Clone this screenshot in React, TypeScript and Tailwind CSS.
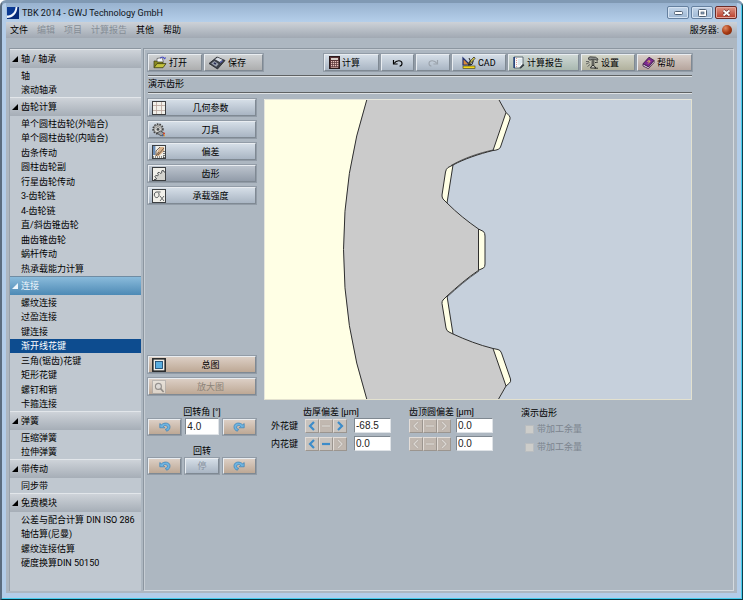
import React from "react";
import clsx from "clsx";

type Section = { title: string; items: string[]; active?: boolean };

const SECTIONS: Section[] = [
  { title: "轴 / 轴承", items: ["轴", "滚动轴承"] },
  {
    title: "齿轮计算",
    items: [
      "单个圆柱齿轮(外啮合)",
      "单个圆柱齿轮(内啮合)",
      "齿条传动",
      "圆柱齿轮副",
      "行星齿轮传动",
      "3-齿轮链",
      "4-齿轮链",
      "直/斜齿锥齿轮",
      "曲齿锥齿轮",
      "蜗杆传动",
      "热承载能力计算",
    ],
  },
  {
    title: "连接",
    active: true,
    items: ["螺纹连接", "过盈连接", "键连接", "渐开线花键", "三角(锯齿)花键", "矩形花键", "螺钉和销", "卡箍连接"],
  },
  { title: "弹簧", items: ["压缩弹簧", "拉伸弹簧"] },
  { title: "带传动", items: ["同步带"] },
  {
    title: "免费模块",
    items: ["公差与配合计算 DIN ISO 286", "轴估算(尼曼)", "螺纹连接估算", "硬度换算DIN 50150"],
  },
];

const SELECTED = "渐开线花键";

const MENU = [
  { label: "文件", enabled: true },
  { label: "编辑", enabled: false },
  { label: "项目", enabled: false },
  { label: "计算报告", enabled: false },
  { label: "其他", enabled: true },
  { label: "帮助", enabled: true },
];

/* ---------- icons ---------- */

function LogoIcon() {
  return (
    <svg width="12" height="12" viewBox="0 0 12 12" aria-hidden="true">
      <rect width="12" height="12" fill="#0b3a93" />
      <path d="M0 9.5C5 9.5 8.5 6.5 9.5 0H12V12H0Z" fill="#062a78" />
      <path d="M0 8.6C4.6 8.4 8 5.6 8.6 0L10.4 0C10 7 6 10.8 0 11Z" fill="#f2f7fd" />
    </svg>
  );
}

function OpenIcon() {
  return (
    <svg width="14" height="13" viewBox="0 0 14 13" aria-hidden="true">
      <path d="M4 8V2.5L9 1.5L10.5 6" fill="#f4f6fb" stroke="#555" strokeWidth=".7" />
      <path d="M7 2.2C9 .5 11 1 12 2.6L12.4 1.4M12 2.8L10.6 2.6" fill="none" stroke="#3a40c8" strokeWidth="1" />
      <path d="M1 11.5V5H3.5L4.5 6H10V8" fill="#8a8a22" stroke="#3a3a10" strokeWidth=".7" />
      <path d="M1 11.7L4 7.6H13L10 11.7Z" fill="#c3c23c" stroke="#3a3a10" strokeWidth=".8" />
    </svg>
  );
}

function SaveIcon() {
  return (
    <svg width="18" height="14" viewBox="0 0 18 14" aria-hidden="true">
      <path d="M1 7.5L9 1L17 4.5L9.5 13Z" fill="#3c4048" stroke="#22252b" strokeWidth=".8" />
      <path d="M7 3.2L9.6 1.4L14.5 3.7L11.8 6Z" fill="#d8dde6" />
      <path d="M3.2 7.4L6.4 5L10.6 8L8.2 10.8Z" fill="#9aa1ad" />
      <path d="M5.4 7.2L6.6 6.3L8.4 7.6L7.3 8.8Z" fill="#2a2d55" />
      <path d="M12 6.6L14.8 4.8" stroke="#5b62c9" strokeWidth="1" />
    </svg>
  );
}

function CalcIcon() {
  return (
    <svg width="11" height="13" viewBox="0 0 11 13" aria-hidden="true">
      <rect x=".5" y=".5" width="10" height="12" fill="#5a3437" stroke="#2b1a1c" />
      <rect x="2" y="2" width="7" height="2" fill="#d9cfc9" />
      <g fill="#e9c3be">
        {[5, 7, 9].map((y) => [2, 4, 6, 8].map((x) => <rect key={`${x}-${y}`} x={x} y={y} width="1.3" height="1.3" />))}
        <rect x="2" y="11" width="7" height=".6" />
      </g>
    </svg>
  );
}

function UndoIcon({ flip = false }: { flip?: boolean }) {
  return (
    <svg width="12" height="10" viewBox="0 0 12 10" className={clsx(flip && "-scale-x-100")} aria-hidden="true">
      <path d="M2 5.5C4.5 2 9.4 2 10 5C10.2 6.8 9.2 7.8 7.6 8.2" fill="none" stroke="currentColor" strokeWidth="1.1" />
      <path d="M1.5 2V6H5.6" fill="none" stroke="currentColor" strokeWidth="1.2" />
    </svg>
  );
}

function CadIcon() {
  return (
    <svg width="14" height="13" viewBox="0 0 14 13" aria-hidden="true">
      <path d="M1 2V9H8Z" fill="#d98b3a" stroke="#22306e" strokeWidth="1.2" />
      <path d="M6 7.5L12 1L13 2.4L7.4 8.4Z" fill="#f3e04a" stroke="#222" strokeWidth=".8" />
      <path d="M7 2L8.4 5L7 8M11.4 4.6L10 8.4L6 9" fill="none" stroke="#222" strokeWidth="1" />
      <rect x="1" y="10" width="12" height="2.4" fill="#f5d819" stroke="#3d3a10" strokeWidth=".6" />
    </svg>
  );
}

function ReportIcon() {
  return (
    <svg width="12" height="13" viewBox="0 0 12 13" aria-hidden="true">
      <path d="M1 1H10V8L6.5 12H1Z" fill="#f4f7f7" stroke="#53606b" strokeWidth=".9" />
      <path d="M1.2 1V12" stroke="#1b3a7a" strokeWidth="1.4" />
      <path d="M3.5 2V11" stroke="#d06b6b" strokeWidth=".7" strokeDasharray="1 1" />
      <path d="M5 4H9M5 6H9M5 8H8" stroke="#a6c3d6" strokeWidth=".6" />
      <path d="M6.3 12.2L10.5 8L11.4 9.2L7.8 12.6Z" fill="#2c3338" />
    </svg>
  );
}

function SettingsIcon() {
  return (
    <svg width="14" height="13" viewBox="0 0 14 13" aria-hidden="true">
      <path d="M3.5 1.8L5 .8L10.5 1.2L13 3L12.5 4.4L9.4 3.4H7L5 4.2L3.6 3.4Z" fill="#8c8f8c" stroke="#1e1f1e" strokeWidth=".7" />
      <path d="M1 5.5H4M1 8L4.5 6.5M2.5 10.5L5 8.5" stroke="#5b5c5a" strokeWidth=".9" />
      <path d="M7.2 4V9.5M8.8 4V9.5" stroke="#2a2b2a" strokeWidth=".9" />
      <path d="M5.4 12L7 9.6H9L10.8 12ZM10 6.6L13 6M9.5 12.2H13" fill="#d7d8d2" stroke="#1e1f1e" strokeWidth=".9" />
    </svg>
  );
}

function HelpIcon() {
  return (
    <svg width="13" height="13" viewBox="0 0 13 13" aria-hidden="true">
      <path d="M1 7.8L7 1.2L12 4.4L6.6 11Z" fill="#7d2a92" stroke="#35103f" strokeWidth=".8" />
      <path d="M1 8V10L6.4 12.6L12 6.6V4.6L6.6 11Z" fill="#f2ecf4" stroke="#35103f" strokeWidth=".8" />
      <path d="M5.4 5.8C6.4 4.2 8.6 4.6 7.6 6C7 6.6 6.4 6.6 6.2 7.4" fill="none" stroke="#f4d54f" strokeWidth="1" />
    </svg>
  );
}

function TileIcon({ kind, dim = false }: { kind: string; dim?: boolean }) {
  return (
    <svg width="14" height="14" viewBox="0 0 14 14" className={clsx(dim && "opacity-60")} aria-hidden="true">
      {kind !== "gear" && <rect x=".5" y=".5" width="13" height="13" fill="#f1f0ea" stroke={dim ? "#aaa" : "#3c3f42"} />}
      {kind === "grid" && <path d="M4.5 1V13M9.5 1V13M1 4.5H13M1 9.5H13" stroke="#b8a39b" strokeWidth=".8" />}
      {kind === "gear" && (
        <>
          <circle cx="6" cy="6" r="4.8" fill="#c3c5c4" stroke="#444" strokeWidth="1.8" strokeDasharray="1.6 1" />
          <circle cx="6" cy="6" r="4" fill="#d4d5d2" stroke="#555" strokeWidth=".6" />
          <path d="M3.4 5.4A2.8 2.8 0 0 1 8.6 5.4" fill="none" stroke="#777" strokeWidth=".8" />
          <circle cx="6" cy="6.4" r="1.4" fill="#4b4f52" />
          <path d="M5 10L8.5 8L12.5 10.5L9 13Z" fill="#9a9fa3" stroke="#333" strokeWidth=".7" />
          <circle cx="12" cy="10.4" r="1" fill="#d6432e" />
          <circle cx="12" cy="12.6" r="1" fill="#e39a26" />
          <circle cx="10.8" cy="12.6" r=".8" fill="#2f56b0" />
        </>
      )}
      {kind === "deviation" && (
        <>
          <path d="M1 1H3.4V10H1Z" fill="#6a8db8" />
          <path d="M3 11L8 2L12 2V6L7 11Z" fill="#d9b28a" />
          <path d="M4 10V6L8 2M6 10L12 3M4 11L7 7" fill="none" stroke="#5a4a3e" strokeWidth=".8" />
          <path d="M1 12H13M12 6V13" stroke="#25282c" strokeWidth="1.2" strokeDasharray="1 1" />
        </>
      )}
      {kind === "profile" && (
        <>
          <path d="M4 13C4.4 9 7.6 5.6 13 5V13Z" fill="#d3d3ce" />
          <path
            d="M2 12.4L4 12.6L4.4 11L2.8 9.8L3.8 8.4L5.4 9L6.4 7.8L5.6 6L7 5.2L8.2 6.4L9.8 5.8L9.8 3.8L11.4 3.4L12 5H13"
            fill="none"
            stroke="#4b4e50"
            strokeWidth="1"
          />
        </>
      )}
      {kind === "sigma" && (
        <>
          <path d="M8.6 3H5A2.4 2.8 0 1 0 6.4 3.8" fill="none" stroke="#55585a" strokeWidth="1" />
          <path d="M8 7L12 12M12 7L8 12" stroke="#55585a" strokeWidth=".9" />
        </>
      )}
      {kind === "overview" && (
        <>
          <rect x="1" y="1" width="12" height="12" fill="#f1efe9" stroke="#222" strokeWidth="1.2" />
          <rect x="3.5" y="3.5" width="7" height="7" fill="#5aaee0" stroke="#1f4d73" strokeWidth=".9" />
        </>
      )}
      {kind === "zoom" && (
        <>
          <circle cx="6.4" cy="6.4" r="3" fill="#e8eef2" stroke="#6f7478" strokeWidth="1.1" />
          <path d="M8.6 8.6L11.6 12" stroke="#6f7478" strokeWidth="1.6" />
        </>
      )}
    </svg>
  );
}

function RotateIcon({ flip = false }: { flip?: boolean }) {
  return (
    <svg width="12" height="10" viewBox="0 0 12 10" className={clsx(flip && "-scale-x-100")} aria-hidden="true">
      <path
        d="M.8 1.6L2.4 2.8C5 .2 10.4 .4 11 4.4C11.3 6.8 9.8 8.6 7.6 9.2L6.4 7.2C8 7 8.8 6 8.4 4.8C7.8 3.2 5.6 3 4.4 4.4L5.8 5.8H.8Z"
        fill="#6fb4e0"
        stroke="#3b7fb4"
        strokeWidth=".7"
      />
    </svg>
  );
}

/* ---------- shared controls ---------- */

const BEVEL = "border border-t-[#e9edf1] border-l-[#e9edf1] border-r-[#7f8993] border-b-[#7f8993] outline outline-[#929ca7]";

const TONES = {
  grey: "bg-linear-to-b from-[#cfd2d4] to-[#adaeaf]",
  blue: "bg-linear-to-b from-[#d5dee7] to-[#a9b5c3]",
  pressed: "bg-linear-to-b from-[#bcc4ce] to-[#929ca9]",
  green: "bg-linear-to-b from-[#cfd8d5] to-[#a9b8b0]",
  olive: "bg-linear-to-b from-[#d3d5c9] to-[#b1b19d]",
  rose: "bg-linear-to-b from-[#d8cfca] to-[#b6a59d]",
  tan: "bg-linear-to-b from-[#dccfc5] to-[#bda895]",
};

type Tone = keyof typeof TONES;

function ToolButton(props: {
  tone: Tone;
  icon: React.ReactNode;
  label?: string;
  name?: string;
  layout: string;
  disabled?: boolean;
}) {
  return (
    <button
      type="button"
      aria-label={props.name}
      disabled={props.disabled}
      className={clsx(
        "flex h-[17px] items-center gap-[2px] whitespace-nowrap",
        BEVEL,
        TONES[props.tone],
        props.layout,
        props.disabled ? "text-[#9ba3ac]" : "text-black",
      )}
    >
      {props.icon}
      {props.label && <span>{props.label}</span>}
    </button>
  );
}

function PageButton(props: { tone: Tone; kind: string; label: string; disabled?: boolean }) {
  return (
    <button
      type="button"
      disabled={props.disabled}
      className={clsx(
        "flex h-[17px] w-full items-center pl-[3px]",
        BEVEL,
        TONES[props.tone],
        props.disabled ? "text-[#8c8378]" : "text-black",
      )}
    >
      <TileIcon kind={props.kind} dim={props.disabled} />
      <span className="flex-1 text-center">{props.label}</span>
    </button>
  );
}

function RotateButton({ name, flip }: { name: string; flip?: boolean }) {
  return (
    <button type="button" aria-label={name} className={clsx("flex h-4 items-center justify-center", BEVEL, TONES.tan)}>
      <RotateIcon flip={flip} />
    </button>
  );
}

const STEP_PATHS = ["M8 2L4 6L8 10", "M2 6H10", "M4 2L8 6L4 10"];
const STEP_NAMES = ["减小", "归零", "增大"];

function Stepper({ label, enabled }: { label: string; enabled: boolean[] }) {
  return (
    <div className="flex">
      {STEP_PATHS.map((d, i) => (
        <button
          key={d}
          type="button"
          disabled={!enabled[i]}
          aria-label={`${label} ${STEP_NAMES[i]}`}
          className={clsx(
            "flex h-[14px] w-[14px] items-center justify-center border border-t-[#e3ddd8] border-l-[#e3ddd8] border-r-[#9b958f] border-b-[#9b958f]",
            enabled[i] ? "bg-[#c8c3be]" : "bg-[#c1b8b0]",
          )}
        >
          <svg width="12" height="12" viewBox="0 0 12 12" aria-hidden="true">
            {!enabled[i] && <path d={d} fill="none" stroke="#a19b95" strokeWidth="2.2" />}
            <path d={d} fill="none" stroke={enabled[i] ? "#3d8cc9" : "#dcd7d2"} strokeWidth={enabled[i] ? 2.2 : 1.5} />
          </svg>
        </button>
      ))}
    </div>
  );
}

function NumberBox({ id, label, value, size }: { id?: string; label?: string; value: string; size: string }) {
  return (
    <input
      id={id}
      type="text"
      aria-label={label}
      defaultValue={value}
      className={clsx(
        "block border border-t-[#7f8891] border-l-[#7f8891] border-r-[#dfe3e7] border-b-[#dfe3e7] bg-white px-px font-['Liberation_Sans',sans-serif] text-[10px] leading-3 text-[#222] outline-none",
        size,
      )}
    />
  );
}

/* ---------- drawing of the spline teeth ---------- */

function ToothDrawing() {
  const flank =
    "M234.5 0L242 13.5L245 16.5Q246.5 18 246 20L236.5 48Q235.5 51 229 51.5C215 55 200 60 189 66L184 68.5Q182 70 181.5 73L178 96Q177.8 98 179 100L183 104C193 114 203 122 214.5 130L219.5 132.5Q221 134 221 137V165Q221 168 219.5 169L215 171C203 179 193 188 183 197L179 201Q177.8 202.5 178 204.5L182 229Q182.5 232 185 233L189 235C202 241 215 246 229 249.5L234 250.5Q236.5 251 237.5 254L246.5 280Q247.2 282.5 245.5 284L242 287L234 301";
  return (
    <svg viewBox="0 0 428 301" className="block h-auto w-full bg-[#c6d0dc]" role="img" aria-label="演示齿形">
      <path d={`${flank}H0V0Z`} fill="#ffffe5" />
      <path
        d="M103 0A494 494 0 0 0 103 301H234L242 287L229 249.5C215 246 202 241 189 235L183 197C193 188 203 179 214.5 171V130C203 122 193 114 183 104L189 66C200 60 215 55 229 51.5L242 13.5L234.5 0Z"
        fill="#cbcbcb"
      />
      <path d="M189 66L183 104L179 100Q177.8 98 178 96L181.5 73Q182 70 184 68.5Z" fill="#ffffe5" />
      <path d="M183 197L189 235L185 233Q182.5 232 182 229L178 204.5Q177.8 202.5 179 201Z" fill="#ffffe5" />
      <g fill="none" stroke="#2e2e2e" strokeWidth="1">
        <path d="M103 0A494 494 0 0 0 103 301" />
        <path d={flank} />
        <path d="M242 13.5L229 51.5M189 66L183 104M214.5 130V171M183 197L189 235M229 249.5L242 287" />
        <path d="M229 51C215 54 200 59 187 66.5M183 198C193 189 203 180 215 172" strokeWidth=".7" />
      </g>
      <path d="M.5 301V.5H428" fill="none" stroke="#e6e6dc" />
      <path d="M0 300.5H427.5V0" fill="none" stroke="#e3e1cf" />
    </svg>
  );
}

/* ---------- page parts ---------- */

function TitleBar() {
  const cap = "flex h-[13px] w-[22px] items-center justify-center rounded-[2px] border border-[#65809f] shadow-[inset_0_0_0_1px_#d5e3f2]";
  return (
    <header className="flex h-[19px] items-center bg-linear-to-b from-[#98b2cf] to-[#b5cfea] pl-px">
      <LogoIcon />
      <h1 className="ml-[3px] flex-1 text-[#10151b]">TBK 2014 - GWJ Technology GmbH</h1>
      <div className="flex gap-[2px]">
        <button type="button" aria-label="最小化" className={clsx(cap, "bg-linear-to-b from-[#c4d6ea] to-[#9db7d3]")}>
          <svg width="9" height="4" viewBox="0 0 9 4" aria-hidden="true">
            <rect x=".5" y=".5" width="8" height="3" rx="1" fill="#fff" stroke="#4e5f72" />
          </svg>
        </button>
        <button type="button" aria-label="最大化" className={clsx(cap, "bg-linear-to-b from-[#c4d6ea] to-[#9db7d3]")}>
          <svg width="9" height="8" viewBox="0 0 9 8" aria-hidden="true">
            <rect x=".5" y=".5" width="8" height="7" rx="1" fill="#fff" stroke="#4e5f72" />
            <rect x="3" y="3" width="3" height="2" fill="#8fa6bf" stroke="#4e5f72" strokeWidth=".7" />
          </svg>
        </button>
        <button
          type="button"
          aria-label="关闭"
          className="flex h-[13px] w-[22px] items-center justify-center rounded-[2px] border border-[#6b2a26] bg-linear-to-b from-[#dc9486] to-[#b93a28] shadow-[inset_0_0_0_1px_#e3a79c]"
        >
          <svg width="9" height="8" viewBox="0 0 9 8" aria-hidden="true">
            <path d="M1.5 1.5L7.5 6.5M7.5 1.5L1.5 6.5" stroke="#5c2b2b" strokeWidth="3" />
            <path d="M1.5 1.5L7.5 6.5M7.5 1.5L1.5 6.5" stroke="#fff" strokeWidth="1.8" />
          </svg>
        </button>
      </div>
    </header>
  );
}

function MenuBar() {
  return (
    <nav className="flex h-4 items-center bg-linear-to-b from-[#cdd2d8] to-[#a1a9b3] pl-1 pr-[5px]">
      <div className="flex flex-1 gap-[9px]">
        {MENU.map((m) => (
          <button key={m.label} type="button" disabled={!m.enabled} className={m.enabled ? "text-black" : "text-[#858d96]"}>
            {m.label}
          </button>
        ))}
      </div>
      <span>服务器:</span>
      <span className="ml-[3px] h-[10px] w-[10px] rounded-full bg-radial-[at_35%_30%] from-[#e08a62] via-[#a83a12] to-[#6e2006]" />
    </nav>
  );
}

function Sidebar() {
  return (
    <nav className="w-[132px] shrink-0 border-t border-l border-t-[#8c96a0] border-l-[#98a2ac] bg-[#c0c8d0]">
      {SECTIONS.map((s) => (
        <section key={s.title}>
          <button
            type="button"
            className={clsx(
              "flex h-[19px] w-full items-center gap-[3px] border-t pl-[2px] text-left",
              s.active
                ? "border-[#6f8ca3] bg-linear-to-b from-[#8abbdb] to-[#4d8ab5] text-[#eef6fc]"
                : "border-[#e2e6ea] bg-linear-to-b from-[#ced3d9] to-[#a6aeb7] text-black",
            )}
          >
            <svg width="6" height="6" viewBox="0 0 6 6" aria-hidden="true">
              <path d="M6 0V6H0Z" fill="currentColor" />
            </svg>
            <span>{s.title}</span>
          </button>
          <ul>
            {s.items.map((item) => (
              <li key={item} className="odd:h-[15px] even:h-[14px]">
                <a
                  href="#"
                  className={clsx(
                    "flex h-full items-center whitespace-nowrap pl-[11px]",
                    item === SELECTED ? "bg-[#0d4c8f] text-white" : "text-black",
                  )}
                >
                  {item}
                </a>
              </li>
            ))}
          </ul>
        </section>
      ))}
    </nav>
  );
}

function Toolbar() {
  return (
    <div className="flex gap-[2px]">
      <ToolButton tone="grey" layout="w-[54px] pl-1" icon={<OpenIcon />} label="打开" />
      <ToolButton tone="grey" layout="w-[59px] pl-[3px]" icon={<SaveIcon />} label="保存" />
      <div className="flex-1" />
      <ToolButton tone="blue" layout="w-[55px] pl-1" icon={<CalcIcon />} label="计算" />
      <ToolButton tone="blue" layout="w-[33px] justify-center" icon={<UndoIcon />} name="撤销" />
      <ToolButton tone="blue" layout="w-[34px] justify-center" icon={<UndoIcon flip />} name="重做" disabled />
      <ToolButton tone="blue" layout="w-[54px] pl-[9px]" icon={<CadIcon />} label="CAD" />
      <ToolButton tone="green" layout="w-[71px] pl-1" icon={<ReportIcon />} label="计算报告" />
      <ToolButton tone="olive" layout="w-[54px] pl-[3px]" icon={<SettingsIcon />} label="设置" />
      <ToolButton tone="rose" layout="w-[55px] pl-1" icon={<HelpIcon />} label="帮助" />
    </div>
  );
}

function Rotation() {
  return (
    <div className="w-[108px] shrink-0 text-center">
      <label htmlFor="angle" className="block h-3">
        回转角 [°]
      </label>
      <div className="grid grid-cols-3 items-center gap-1">
        <RotateButton name="逆时针一步" />
        <NumberBox id="angle" value="4.0" size="h-[17px] w-full" />
        <RotateButton name="顺时针一步" flip />
      </div>
      <p className="mt-[10px] h-[13px]">回转</p>
      <div className="grid grid-cols-3 items-center gap-1">
        <RotateButton name="逆时针回转" />
        <button type="button" disabled className={clsx("h-4 text-[#8791a0]", BEVEL, TONES.blue)}>
          停
        </button>
        <RotateButton name="顺时针回转" flip />
      </div>
    </div>
  );
}

const DEVIATION_ROWS = [
  { name: "外花键", thickness: "-68.5", enabled: [true, false, true] },
  { name: "内花键", thickness: "0.0", enabled: [true, true, false] },
];

function Deviations() {
  return (
    <div className="ml-[15px] grid grid-cols-[32px_2px_49px_55px_47px_37px] grid-rows-[9px_15px_15px] items-center gap-y-[3px]">
      <span />
      <span className="col-span-3 self-start whitespace-nowrap">齿厚偏差 [µm]</span>
      <span className="col-span-2 self-start whitespace-nowrap">齿顶圆偏差 [µm]</span>
      {DEVIATION_ROWS.map((row) => (
        <React.Fragment key={row.name}>
          <span className="col-span-2">{row.name}</span>
          <Stepper label={`${row.name} 齿厚偏差`} enabled={row.enabled} />
          <NumberBox label={`${row.name} 齿厚偏差`} value={row.thickness} size="h-[15px] w-[37px]" />
          <Stepper label={`${row.name} 齿顶圆偏差`} enabled={[false, false, false]} />
          <NumberBox label={`${row.name} 齿顶圆偏差`} value="0.0" size="h-[15px] w-[37px]" />
        </React.Fragment>
      ))}
    </div>
  );
}

function ProfileOptions() {
  return (
    <fieldset className="ml-7">
      <legend className="h-[14px] pt-px">演示齿形</legend>
      {["a", "b"].map((k) => (
        <label key={k} className="ml-1 flex h-[18px] items-center gap-[3px] text-[#7c858f]">
          <input type="checkbox" disabled className="h-[9px] w-[9px] appearance-none border border-[#b9bdc0] bg-[#cdcdca]" />
          带加工余量
        </label>
      ))}
    </fieldset>
  );
}

export default function App() {
  return (
    <div className="flex min-h-screen flex-col rounded-t-md border-t-[3px] border-r border-b border-l-2 border-t-[#8099b3] border-r-[#0b3f50] border-b-[#06343f] border-l-[#5b6d80] bg-[#b3cde9] pr-[5px] pb-[6px] pl-1 font-[Roboto,'Noto_Sans_CJK_SC',sans-serif] text-[9px] leading-3 text-black shadow-[inset_-1px_-1px_0_#45cdee]">
      <TitleBar />
      <div className="flex flex-1 flex-col bg-[#adb7c1]">
        <MenuBar />
        <div className="flex flex-1 gap-[2px] px-[3px] pt-[10px] pb-[2px]">
          <Sidebar />
          <main className="min-w-0 flex-1 border border-[#8c96a0] border-r-[#d5dbe0] border-b-[#d5dbe0] pt-[5px] pr-[41px] pl-1 shadow-[inset_1px_1px_0_#c6cdd4]">
            <Toolbar />
            <div className="mt-1 mb-[6px] flex h-[18px] items-center border-y border-[#5f6263] shadow-[inset_0_1px_0_#dde1e4,0_1px_0_#dde1e4]">
              <h2>演示齿形</h2>
            </div>
            <div className="flex gap-2">
              <div className="flex w-[108px] shrink-0 flex-col gap-[5px] pb-[5px]">
                <PageButton tone="blue" kind="grid" label="几何参数" />
                <PageButton tone="blue" kind="gear" label="刀具" />
                <PageButton tone="blue" kind="deviation" label="偏差" />
                <PageButton tone="pressed" kind="profile" label="齿形" />
                <PageButton tone="blue" kind="sigma" label="承载强度" />
                <div className="flex-1" />
                <PageButton tone="tan" kind="overview" label="总图" />
                <PageButton tone="tan" kind="zoom" label="放大图" disabled />
              </div>
              <div className="min-w-0 flex-1">
                <ToothDrawing />
              </div>
            </div>
            <div className="mt-[6px] flex items-start">
              <Rotation />
              <Deviations />
              <ProfileOptions />
            </div>
          </main>
        </div>
      </div>
    </div>
  );
}
